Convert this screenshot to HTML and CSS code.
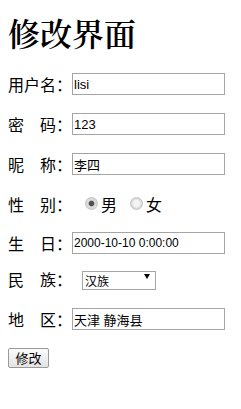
FILE: index.html
```html
<!DOCTYPE html>
<html lang="zh-CN">
<head>
  <meta charset="UTF-8">
  <title>修改界面</title>
  <link rel="stylesheet" href="styles.css">
</head>
<body>

  <h1>修改界面</h1>
  <form class="form">
    <div class="row">
      <span class="label">用户名：</span>
      <input type="text" class="campo" value="lisi">
    </div>
    <div class="row">
      <span class="label">密　码：</span>
      <input type="text" class="campo" value="123">
    </div>
    <div class="row">
      <span class="label">昵　称：</span>
      <input type="text" class="campo" value="李四">
    </div>
    <div class="row row-radio">
      <span class="label">性　别：</span>
      <label class="opcao"><input type="radio" name="sexo" class="radio" checked>男</label>
      <label class="opcao opcao-2"><input type="radio" name="sexo" class="radio">女</label>
    </div>
    <div class="row">
      <span class="label">生　日：</span>
      <input type="text" class="campo data" value="2000-10-10 0:00:00">
    </div>
    <div class="row row-select">
      <span class="label">民　族：</span>
      <span class="select-box">
        <select class="select">
          <option>汉族</option>
          <option>回族</option>
        </select>
      </span>
    </div>
    <div class="row">
      <span class="label">地　区：</span>
      <input type="text" class="campo" value="天津 静海县">
    </div>
    <div class="row row-botao">
      <button type="button" class="botao">修改</button>
    </div>
  </form>

</body>
</html>
```

FILE: styles.css
```css
body {
  margin: 0;
  padding: 0 8px;
  background: #fff;
  color: #000;
  font-family: "Noto Sans CJK SC", "Liberation Sans", sans-serif;
  font-size: 16px;
}

h1 {
  margin: 16px 0 0;
  font-family: "Noto Serif CJK SC", "Noto Sans CJK SC", serif;
  font-size: 32px;
  line-height: 32px;
  font-weight: 600;
}

.form {
  display: flex;
  flex-direction: column;
  margin-top: 25px;
}

.row {
  display: flex;
  align-items: center;
  height: 22px;
  margin-bottom: 18px;
}

.row-radio {
  height: 21px;
}

.row-select {
  margin-top: -4px;
}

.label {
  width: 64px;
  line-height: 16px;
  white-space: nowrap;
}

.campo {
  box-sizing: border-box;
  width: 153px;
  height: 22px;
  margin: 0;
  padding: 1px 1px;
  border: 1px solid #a5a5a5;
  font-family: "Liberation Sans", "Noto Sans CJK SC", sans-serif;
  font-size: 13px;
  color: #000;
  outline: none;
}

.data {
  font-size: 12px;
}

.opcao {
  display: flex;
  align-items: center;
  line-height: 16px;
}

.radio {
  appearance: none;
  box-sizing: border-box;
  width: 13px;
  height: 13px;
  margin: 0 3px 0 13px;
  border: 1px solid #c4c4c4;
  border-radius: 50%;
  background: radial-gradient(circle, #f4f4f4 0 3px, #d8d8d8 5px);
}

.radio:checked {
  background: radial-gradient(circle, #505050 0 2.2px, #9a9a9a 2.8px, #dedede 3.4px, #d6d6d6 6px);
}

.opcao-2 .radio {
  margin-left: 13px;
}

.select-box {
  position: relative;
  margin-left: 10px;
}

.select {
  appearance: none;
  box-sizing: border-box;
  width: 74px;
  height: 19px;
  margin: 0;
  padding: 0 0 0 2px;
  border: 1px solid #a5a5a5;
  border-radius: 0;
  background: #fff;
  font-family: "Noto Sans CJK SC", sans-serif;
  font-size: 12px;
  color: #000;
}

.select-box::after {
  content: "";
  position: absolute;
  right: 6px;
  top: 7px;
  border-left: 3px solid transparent;
  border-right: 3px solid transparent;
  border-top: 5px solid #000;
  pointer-events: none;
}

.row-botao {
  height: 20px;
}

.botao {
  box-sizing: border-box;
  width: 41px;
  height: 20px;
  padding: 0;
  border: 1px solid #9a9a9a;
  border-radius: 2px;
  background: linear-gradient(#fbfbfb, #e3e3e3);
  font-family: "Noto Sans CJK SC", sans-serif;
  font-size: 13px;
  line-height: 16px;
  color: #000;
}
```
